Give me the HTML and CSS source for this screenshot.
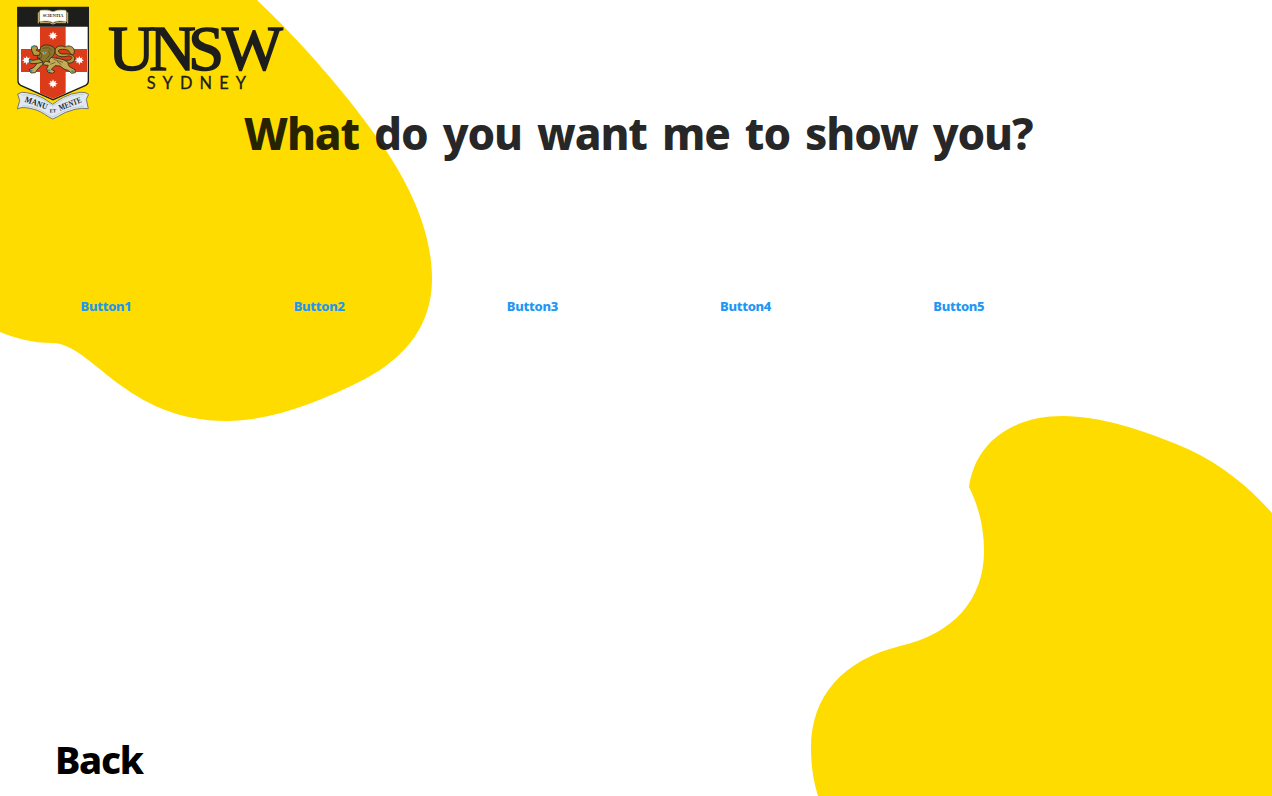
FILE: index.html
```html
<!DOCTYPE html>
<html lang="en">
<head>
<meta charset="utf-8">
<title>UNSW Sydney</title>
<link rel="stylesheet" href="styles.css">
</head>
<body>
<svg class="backdrop" viewBox="0 0 1272 796" aria-hidden="true">
  <path d="M0 0H257C299 40 345 91 383 146C413 190 432 235 432 279C432 323 408 356 365 379C318 403 270 421 227 421C126 421 92 344 53 343C31 343 15 338 0 332Z"/>
  <path d="M969 487C975 444 1010 416 1063 416C1099 416 1145 430 1190 450C1222 465 1250 488 1272 513V796H818C813 780 811 765 811 748C811 696 843 660 900 646C953 634 984 600 984 551C984 528 979 507 969 487Z"/>
</svg>
<main class="page">
  <header class="logo">
    <svg class="logo-art" viewBox="0 0 900 390" role="img" aria-label="UNSW Sydney">
      <path d="M54 22H265V243Q265 252 257 256L159 299L62 256Q54 252 54 243Z" fill="#fff" stroke="#1d1d1b" stroke-width="4"/>
      <path d="M120 80H197V280L159 296L120 280ZM63 147H261V216H63Z" fill="#dc3b1a"/>
      <path d="M52 21H267V80H52Z" fill="#1d1d1b"/>
      <path d="M119 35L121 31Q145 28 159 35Q173 28 197 31L199 35V65Q170 60 159 68Q148 60 119 65Z" fill="#fff" stroke="#c9b570" stroke-width="2"/>
      <path d="M115 37V70M203 37V70M120 68H149L159 72L169 68H198" fill="none" stroke="#d8c57b" stroke-width="3"/>
      <text class="motto-small" x="128" y="52" textLength="62" lengthAdjust="spacingAndGlyphs">SCIENTIA</text>
      <g fill="#fff">
        <path id="star" d="M159 94L162 101L169 98L166 104L173 107L166 110L169 116L162 113L159 121L156 113L149 116L152 110L145 107L152 104L149 98L156 101Z"/>
        <use href="#star" y="144"/><use href="#star" x="-79" y="74"/><use href="#star" x="79" y="74"/>
      </g>
      <g stroke="#302b16" stroke-width="2.5" stroke-linejoin="round">
        <path d="M168 174C185 181 205 184 213 178C221 171 211 165 199 169C181 173 164 167 165 152C166 138 181 135 196 141C204 134 221 139 223 151C225 164 215 168 210 158C205 147 190 147 178 149C171 154 179 163 192 162C215 160 229 169 223 181C220 189 209 190 202 189Z" fill="#b89b3b"/>
        <path d="M142 171C162 174 188 175 202 185C207 193 202 197 212 202L225 209L226 218L215 220L206 212L192 207L180 198L165 197L154 208L165 214L157 220L143 216L140 206L145 196L126 194L111 210L106 218L93 219L87 209L101 203L115 186Z" fill="#c4ab55"/>
        <path d="M122 142C130 132 148 133 160 141C168 149 165 162 158 169L146 180L150 187L136 183L129 193L125 181L114 184L119 174L111 174L116 164L111 158L119 153Z" fill="#8d752d"/>
        <path d="M118 166L101 166L95 151L94 143L102 137L111 139L113 147L108 150L121 157Z" fill="#b69a3e"/>
        <path d="M117 177L99 181L88 178L88 188L96 191L113 190L130 186Z" fill="#b69a3e"/>
      </g>
      <path d="M128 145L145 143L155 151M120 157L126 165L121 178M146 151L150 164L140 176M161 178L189 187M166 187L151 193M171 184L184 194" fill="none" stroke="#50411d" stroke-width="2"/>
      <path d="M126 156H141L132 164Z" fill="#d7c276"/>
      <path d="M94 143L99 138M89 182L94 185M90 210L97 214M131 157L136 160M145 209L150 213M214 214L221 214" stroke="#2792ad" stroke-width="5"/>
      <path d="M53 282Q64 274 80 278Q109 282 129 294Q145 304 158 313Q172 302 190 292Q213 280 240 277Q257 275 266 283L259 298L265 326Q245 323 225 328Q192 336 173 350L158 357Q147 352 134 343Q112 327 76 323Q62 321 52 327L59 302Z" fill="#e0e9f3" stroke="#77776c" stroke-width="3"/>
      <path d="M64 285Q104 282 133 301L158 318L190 298Q217 282 253 283M66 318Q101 317 128 334L158 351L186 336Q217 320 252 318" fill="none" stroke="#b7c3c9" stroke-width="2"/>
      <text class="motto" transform="translate(73 305) rotate(20)" textLength="70" lengthAdjust="spacingAndGlyphs">MANU</text>
      <text class="motto-et" transform="translate(149 338) rotate(-3)">ET</text>
      <text class="motto" transform="translate(180 332) rotate(-21)" textLength="71" lengthAdjust="spacingAndGlyphs">MENTE</text>
      <text class="wordmark" x="325 448 565 666" y="211">UNSW</text>
      <text class="city" x="440" y="268" textLength="298">SYDNEY</text>
    </svg>
  </header>
  <h1 class="title">What do you want me to show you?</h1>
  <nav class="options">
    <a class="option">Button1</a><a class="option">Button2</a><a class="option">Button3</a><a class="option">Button4</a><a class="option">Button5</a>
  </nav>
  <a class="back">Back</a>
</main>
</body>
</html>
```
FILE: styles.css
```css
body {
  margin: 0;
  background: #fff;
  font-family: "Noto Sans", sans-serif;
}
.backdrop {
  position: absolute;
  inset: 0;
  width: 1272px;
  height: 796px;
  fill: #ffdc00;
}
.page {
  position: relative;
  height: 796px;
  display: flex;
  flex-direction: column;
  overflow: hidden;
}
.logo {
  height: 103px;
}
.logo-art {
  display: block;
  width: 300px;
  height: 130px;
}
.motto, .motto-small, .motto-et {
  font-family: "Liberation Serif", serif;
  font-weight: bold;
  fill: #1d1d1b;
}
.motto { font-size: 26px; }
.motto-small { font-size: 15px; }
.motto-et { font-size: 15px; }
.wordmark {
  font-family: "Liberation Serif", serif;
  font-size: 193px;
  fill: #1d1d1b;
  stroke: #1d1d1b;
  stroke-width: 5px;
}
.city {
  font-family: Lato, sans-serif;
  font-size: 49px;
  fill: #1d1d1b;
  stroke: #1d1d1b;
  stroke-width: 1px;
}
.title {
  margin: 0 0 0 244px;
  height: 60px;
  line-height: 60px;
  font-size: 44px;
  font-weight: 800;
  letter-spacing: -1.1px;
  word-spacing: 4.7px;
  color: rgba(0, 0, 0, 0.85);
  white-space: nowrap;
}
.options {
  display: grid;
  grid-template-columns: repeat(5, 213.2px);
  margin-top: 133px;
}
.option {
  width: 212px;
  text-align: center;
  font-size: 13px;
  line-height: 20px;
  font-weight: 800;
  letter-spacing: -0.3px;
  color: #2196f3;
}
.back {
  margin: auto 0 7px 55px;
  line-height: 60px;
  font-size: 38px;
  font-weight: 800;
  letter-spacing: -1.3px;
  color: #000;
}
```
